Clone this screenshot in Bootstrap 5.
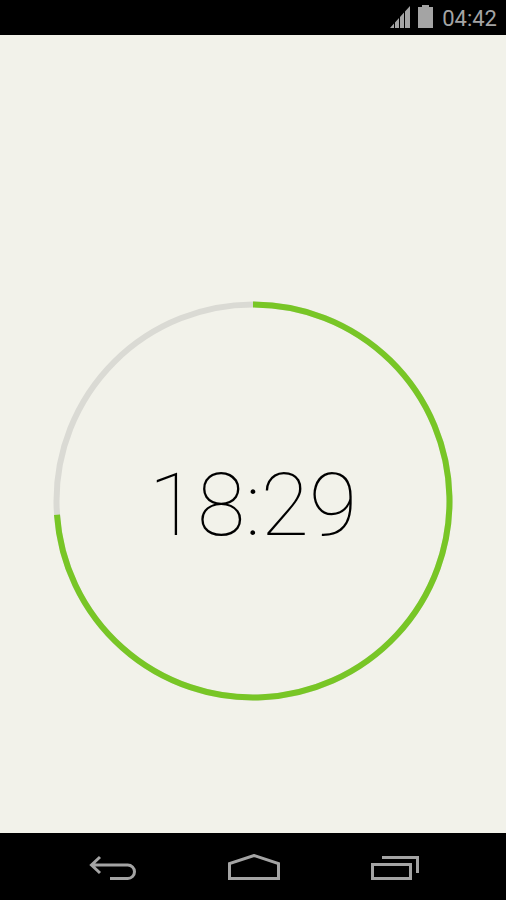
<!DOCTYPE html>
<html lang="en">
<head>
<meta charset="utf-8">
<title>Timer</title>
<link rel="stylesheet" href="https://cdn.jsdelivr.net/npm/bootstrap@5.3.0/dist/css/bootstrap.min.css">
<style>
html,body{height:100%;margin:0;overflow:hidden;background:#000}
.screen{width:506px;height:900px;background:#f2f2ea}
.status-strip{height:35px;background:#000;padding-right:9px;gap:9px;padding-top:5px}
.clock-text{font-family:Roboto,"Liberation Sans",sans-serif;font-size:22px;font-weight:400;line-height:28px;color:#a4a4a4}
.timer-area{padding-top:266px}
.timer-stack{display:grid;width:400px;height:400px;margin-left:53px;place-items:center}
.timer-stack>*{grid-area:1/1}
.timer-digits{font-family:Roboto,"Liberation Sans",sans-serif;font-weight:100;font-size:88px;line-height:1;color:#000;padding-top:8px}
.nav-strip{height:67px;background:#000;padding:21px 87px 0 89px}
</style>
</head>
<body>
<div class="screen d-flex flex-column">
  <div class="status-strip d-flex justify-content-end align-items-start">
    <div class="d-flex align-items-start gap-2">
      <svg width="20" height="24" viewBox="0 0 20 24" class="d-block"><path d="M0 23 L4 18.6 V23Z M5 23 V17.5 L9 13.1 V23Z M10 23 V12 L14 7.6 V23Z M15 23 V6.5 L20 1 V23Z" fill="#a4a4a4"/></svg>
      <svg width="15" height="24" viewBox="0 0 15 24" class="d-block"><path d="M4 0 H11 V2 H15 V23 H0 V2 H4Z" fill="#a4a4a4"/></svg>
    </div>
    <span class="clock-text">04:42</span>
  </div>
  <main class="timer-area flex-grow-1">
    <div class="timer-stack">
      <svg width="400" height="400" viewBox="0 0 400 400" class="d-block">
        <circle cx="200" cy="200" r="196.5" fill="none" stroke="#dadad4" stroke-width="6"/>
        <path d="M200 3.5 A196.5 196.5 0 1 1 3.98 213.7" fill="none" stroke="#78c626" stroke-width="6"/>
      </svg>
      <div class="timer-digits">18:29</div>
    </div>
  </main>
  <nav class="nav-strip d-flex justify-content-between align-items-start">
    <svg width="47" height="26" viewBox="0 0 47 26" class="d-block"><path d="M11 3 L2.5 11 L11 19 M2.5 11 H38.75 A6.75 6.75 0 0 1 38.75 24.5 H21" fill="none" stroke="#a4a4a4" stroke-width="3"/></svg>
    <svg width="52" height="26" viewBox="0 0 52 26" class="d-block"><path d="M1.5 24.5 V9.5 L26 1.5 L50.5 9.5 V24.5Z" fill="none" stroke="#a4a4a4" stroke-width="3"/></svg>
    <svg width="48" height="26" viewBox="0 0 48 26" class="d-block"><path d="M11 3.5 H46.5 V19" fill="none" stroke="#a4a4a4" stroke-width="3"/><rect x="1.5" y="10.5" width="38" height="14" fill="none" stroke="#a4a4a4" stroke-width="3"/></svg>
  </nav>
</div>
<script src="https://cdn.jsdelivr.net/npm/bootstrap@5.3.0/dist/js/bootstrap.bundle.min.js"></script>
</body>
</html>
